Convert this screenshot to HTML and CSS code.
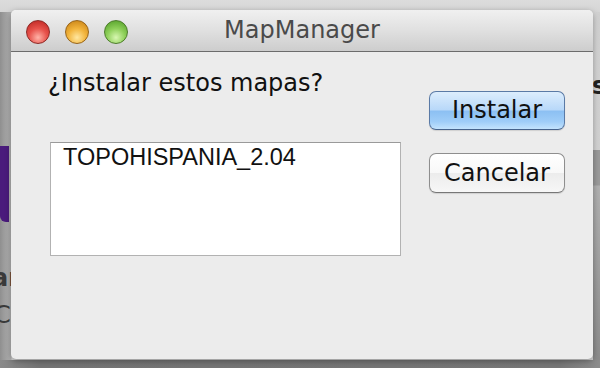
FILE: index.html
```html
<!DOCTYPE html>
<html lang="es">
<head>
  <meta charset="UTF-8" />
  <title>MapManager</title>
  <link rel="stylesheet" href="styles.css">
</head>
<body>
  <div class="desk">
    <div class="desk-purple"></div>
    <div class="desk-text desk-ar">ar</div>
    <div class="desk-text desk-c">C</div>
    <div class="desk-text desk-s">s</div>
    <div class="desk-band"></div>
    <div class="desk-line"></div>

    <div class="window">
      <div class="titlebar">
        <div class="lights">
          <span class="light red"></span>
          <span class="light yellow"></span>
          <span class="light green"></span>
        </div>
        <div class="title">MapManager</div>
      </div>

      <div class="content">
        <div class="main">
          <h1 class="question">¿Instalar estos mapas?</h1>
          <ul class="maplist">
            <li>TOPOHISPANIA_2.04</li>
          </ul>
        </div>
        <div class="actions">
          <button class="btn btn-default">Instalar</button>
          <button class="btn">Cancelar</button>
        </div>
      </div>
    </div>
  </div>
</body>
</html>
```

FILE: styles.css
```css
body {
  margin: 0;
  padding: 0;
  overflow: hidden;
}
.desk {
  position: relative;
  width: 600px;
  height: 368px;
  overflow: hidden;
  padding-top: 10px;
  box-sizing: border-box;
  background:
    linear-gradient(to bottom, #dcdcdc 0, #d6d6d6 12px, transparent 12px),
    linear-gradient(to right, #8f8f8f 0, #b4b4b4 11px, #d8d8d8 12px, #d8d8d8 592px, #cfcfcf 600px);
}
/* bits of the desktop behind the dialog */
.desk-purple {
  position: absolute;
  left: 0;
  top: 146px;
  width: 9px;
  height: 76px;
  background: #4a1b7c;
  border-radius: 0 0 0 6px;
}
.desk-text {
  position: absolute;
  font-family: "DejaVu Sans", sans-serif;
  font-size: 24px;
  color: #3a3a3a;
  line-height: 1;
}
.desk-ar { left: -8px; top: 266px; font-weight: bold; }
.desk-c { left: -6px; top: 303px; }
.desk-s { left: 592px; top: 74px; font-weight: bold; color: #222; }
.desk-band {
  position: absolute;
  left: 593px;
  top: 150px;
  width: 7px;
  height: 218px;
  background: linear-gradient(to bottom, #9a9a9a 0, #9a9a9a 35px, #b0b0b0 36px, #8a8a8a 100%);
}
.desk-line {
  position: absolute;
  left: 0;
  top: 360px;
  width: 600px;
  height: 8px;
  background: linear-gradient(to right, #8a8a8a 0, #747474 40px, #777 560px, #8c8c8c 600px);
}

.window {
  position: relative;
  margin-left: 11px;
  width: 582px;
  height: 349px;
  border-radius: 5px;
  background: #ececec;
  overflow: hidden;
  box-shadow: 0 2px 6px rgba(0, 0, 0, 0.35);
}
.titlebar {
  position: relative;
  height: 41px;
  display: flex;
  align-items: center;
  background: linear-gradient(to bottom, #f0f0f0 0, #e0e0e0 50%, #cdcdcd 100%);
  border-bottom: 1px solid #6c6c6c;
}
.lights {
  display: flex;
  gap: 15px;
  padding-left: 15px;
  padding-top: 2px;
}
.light {
  width: 22px;
  height: 22px;
  border-radius: 50%;
  border: 1px solid rgba(0, 0, 0, 0.4);
}
.red {
  background: radial-gradient(circle at 50% 75%, #ffb3a8 0, #e8534c 45%, #b8201c 100%);
  border-color: #8d2a27;
}
.yellow {
  background: radial-gradient(circle at 50% 75%, #ffe7a0 0, #f2b43c 45%, #c37c10 100%);
  border-color: #97641a;
}
.green {
  background: radial-gradient(circle at 50% 75%, #d8f7b2 0, #8fd05a 45%, #4c9a22 100%);
  border-color: #4d7c2c;
}
.title {
  position: absolute;
  left: 0;
  right: 0;
  top: 6px;
  text-align: center;
  font-family: "DejaVu Sans", sans-serif;
  font-size: 24px;
  line-height: 28px;
  color: #4a4a4a;
}

.content {
  display: flex;
  padding: 0 28px 0 37px;
}
.main {
  flex: 1;
}
.question {
  margin: 17px 0 0;
  font-family: "DejaVu Sans", sans-serif;
  font-weight: normal;
  font-size: 24px;
  line-height: 28px;
  color: #111;
}
.maplist {
  list-style: none;
  margin: 45px 0 0 2px;
  padding: 1px 12px 0;
  width: 325px;
  height: 111px;
  background: #fff;
  border: 1px solid #b2b2b2;
  border-top-color: #9a9a9a;
}
.maplist li {
  font-family: "Liberation Sans", Arial, sans-serif;
  font-size: 23.5px;
  line-height: 26px;
  color: #111;
}
.actions {
  display: flex;
  flex-direction: column;
  gap: 23px;
  padding-top: 39px;
}
.btn {
  width: 136px;
  height: 40px;
  padding: 0;
  border: 1px solid #8e8e8e;
  border-bottom-color: #777;
  border-radius: 7px;
  font-family: "DejaVu Sans", sans-serif;
  font-size: 24px;
  line-height: 37px;
  color: #111;
  background: linear-gradient(to bottom, #ffffff 0, #f8f8f8 50%, #ececec 51%, #f7f7f7 100%);
  box-shadow: 0 1px 1px rgba(0, 0, 0, 0.12);
}
.btn-default {
  height: 39px;
  border-color: #5a7aa6;
  border-bottom-color: #46638c;
  background: linear-gradient(to bottom, #dcedfd 0, #b8d8f9 48%, #8cc0f3 52%, #9fcdf8 80%, #c3e3fd 100%);
}
```
